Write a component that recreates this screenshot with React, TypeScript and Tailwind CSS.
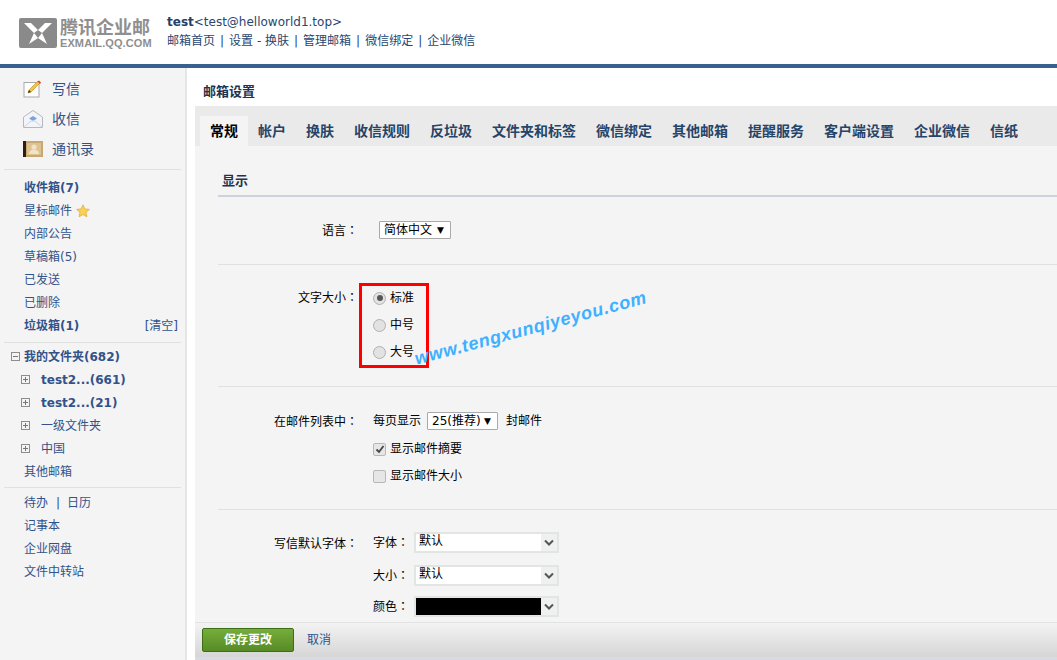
const tabs = ["常规", "帐户", "换肤", "收信规则", "反垃圾", "文件夹和标签", "微信绑定", "其他邮箱", "提醒服务", "客户端设置", "企业微信", "信纸"];

function Logo() {
  return (
    <div className="flex items-start gap-[3px]">
      <svg width="38" height="30" viewBox="0 0 38 30" className="mt-[1px]">
        <rect width="38" height="30" rx="2" fill="#8a8a8a" />
        <path d="M5 5h7l7 7 7-7h7L23 15l5 11-9-6-9 6 5-11z" fill="#fff" />
        <path d="M19 12l4 3-4 5-4-5z" fill="#8a8a8a" />
      </svg>
      <div className="flex w-[92px] flex-col text-[#8f8f8f]">
        <span className="text-[18px] leading-[21px] font-bold whitespace-nowrap">腾讯企业邮</span>
        <span className="font-['Liberation_Sans',sans-serif] text-[11px] leading-[10px] font-bold tracking-[0.1px] whitespace-nowrap">EXMAIL.QQ.COM</span>
      </div>
    </div>
  );
}

function Header() {
  const links = ["邮箱首页", "设置 - 换肤", "管理邮箱", "微信绑定", "企业微信"];
  return (
    <header className="flex h-16 shrink-0 items-start pt-[17px] pl-[19px]">
      <Logo />
      <div className="ml-[15px] text-[12px] text-[#29466f]">
        <div className="-mt-[5px] leading-[20px]">
          <b className="text-[#263f63]">test</b>&lt;test@helloworld1.top&gt;
        </div>
        <div className="flex leading-[19px]">
          {links.map((l, i) => (
            <span key={l} className="whitespace-pre">
              {i > 0 && <span className="px-[5px]">|</span>}
              {l}
            </span>
          ))}
        </div>
      </div>
    </header>
  );
}

function ComposeIcon() {
  return (
    <svg width="20" height="18" viewBox="0 0 20 18">
      <rect x="1" y="2.500" width="15" height="14.500" fill="#fff" stroke="#a9a9a9" />
      <path d="M5 13l1-3 9-9 2 2-9 9z" fill="#f4c53f" stroke="#b9872a" strokeWidth=".6" />
      <path d="M14.500 1.500l1.500-1 2 2-1 1.500z" fill="#d9472f" />
      <path d="M5 13l1-3 2 2z" fill="#333" />
    </svg>
  );
}

function InboxIcon() {
  return (
    <svg width="20" height="18" viewBox="0 0 20 18">
      <path d="M.5 7L10 .5 19.500 7v10.500H.5z" fill="#f3f4f7" stroke="#b4b8c2" />
      <path d="M6 8.500L10 6l4 2.500L10 11z" fill="#7da3dc" />
      <path d="M.5 17.500L8 11h4l7.500 6.500" fill="none" stroke="#d0d3da" />
    </svg>
  );
}

function ContactIcon() {
  return (
    <svg width="20" height="16" viewBox="0 0 20 16">
      <rect width="20" height="16" fill="#c9a971" />
      <rect x="4" y="2" width="14" height="12" fill="#dcc391" />
      <rect width="3" height="16" fill="#2b2015" />
      <circle cx="11" cy="6" r="2.600" fill="#f1e3c4" />
      <path d="M6 13c0-3 2-4.500 5-4.500s5 1.500 5 4.500z" fill="#f1e3c4" />
    </svg>
  );
}

function Star() {
  return (
    <svg width="14" height="14" viewBox="0 0 24 24">
      <path d="M12 1.500l3.200 7 7.600.8-5.700 5.100 1.600 7.500L12 18l-6.700 3.900 1.600-7.500L1.200 9.300l7.600-.8z" fill="#fbd24e" stroke="#e2b04a" strokeWidth="1.500" />
    </svg>
  );
}

function TreeBox({ open }: { open?: boolean }) {
  return (
    <span className="relative mr-[11px] inline-block h-[9px] w-[9px] shrink-0 border border-[#8d8d8d]">
      <span className="absolute top-[3px] left-[1px] h-px w-[5px] bg-[#777]" />
      {!open && <span className="absolute top-[1px] left-[3px] h-[5px] w-px bg-[#777]" />}
    </span>
  );
}

function Item({ children, className = "" }: { children: React.ReactNode; className?: string }) {
  return <div className={`flex h-[23px] items-center whitespace-nowrap ${className}`}>{children}</div>;
}

function Sidebar() {
  const nav: [React.ReactNode, string][] = [
    [<ComposeIcon />, "写信"],
    [<InboxIcon />, "收信"],
    [<ContactIcon />, "通讯录"],
  ];
  return (
    <aside className="w-[187px] shrink-0 border-r-2 border-[#e6e6e6] bg-[#f4f4f4] text-[12px] text-[#31528a]">
      <nav className="pt-[6px] pl-[23px]">
        {nav.map(([icon, label]) => (
          <div key={label} className="flex h-[30px] items-center text-[14px]">
            <span className="flex w-[29px]">{icon}</span>
            {label}
          </div>
        ))}
      </nav>
      <div className="mx-[4px] mt-[5px] h-px bg-[#e0e0e0]" />
      <div className="mt-[6px] pr-[7px] pl-[24px]">
        <Item className="font-bold">收件箱(7)</Item>
        <Item>星标邮件<span className="ml-[4px]"><Star /></span></Item>
        <Item>内部公告</Item>
        <Item>草稿箱(5)</Item>
        <Item>已发送</Item>
        <Item>已删除</Item>
        <Item className="justify-between">
          <b>垃圾箱(1)</b>
          <span>[清空]</span>
        </Item>
      </div>
      <div className="mx-[4px] mt-[5px] h-px bg-[#e0e0e0]" />
      <div className="mt-[2px]">
        <Item className="pl-[11px] font-bold"><span className="-mr-[7px]"><TreeBox open /></span>我的文件夹(682)</Item>
        <Item className="pl-[21px] font-bold"><TreeBox />test2...(661)</Item>
        <Item className="pl-[21px] font-bold"><TreeBox />test2...(21)</Item>
        <Item className="pl-[21px]"><TreeBox />一级文件夹</Item>
        <Item className="pl-[21px]"><TreeBox />中国</Item>
        <Item className="pl-[24px]">其他邮箱</Item>
      </div>
      <div className="mx-[4px] mt-[4px] h-px bg-[#e0e0e0]" />
      <div className="mt-[3px] pl-[24px]">
        <Item className="whitespace-pre">待办<span className="pr-[7px] pl-[8px]">|</span>日历</Item>
        <Item>记事本</Item>
        <Item>企业网盘</Item>
        <Item>文件中转站</Item>
      </div>
    </aside>
  );
}

function MiniSelect({ value, className = "" }: { value: string; className?: string }) {
  return (
    <span className={`flex h-[18px] items-center justify-between rounded-[1px] border border-[#a9a9a9] bg-white pr-[6px] pl-[4px] text-[12px] text-black ${className}`}>
      {value}
      <span className="text-[9px] leading-none">▼</span>
    </span>
  );
}

function Radio({ checked }: { checked?: boolean }) {
  return (
    <span className="flex h-[13px] w-[13px] items-center justify-center rounded-full border border-[#b0b0b0] bg-[#e2e2e2]">
      {checked && <span className="h-[6px] w-[6px] rounded-full bg-[#555]" />}
    </span>
  );
}

function Check({ checked }: { checked?: boolean }) {
  return (
    <span className="flex h-[13px] w-[13px] items-center justify-center rounded-[2px] border border-[#b8b8b8] bg-[#e6e6e6]">
      {checked && (
        <svg width="10" height="10" viewBox="0 0 10 10">
          <path d="M1.500 5.500L4 8l4.500-6" fill="none" stroke="#444" strokeWidth="1.800" />
        </svg>
      )}
    </span>
  );
}

function FontSelect({ value, fill }: { value?: string; fill?: boolean }) {
  return (
    <span className="flex h-[21px] w-[145px] border-2 border-[#e2e6e3] bg-[#f0f0f0]">
      <span className={`flex-1 pl-[3px] text-[12px] leading-[14px] text-black ${fill ? "bg-black" : "bg-white"}`}>{value}</span>
      <span className="flex w-[16px] items-center justify-center">
        <svg width="10" height="7" viewBox="0 0 10 7">
          <path d="M1 1.500l4 4 4-4" fill="none" stroke="#555" strokeWidth="2" />
        </svg>
      </span>
    </span>
  );
}

// the TC cut centres the full-width colon, the SC cut pushes it to the left
function Colon() {
  return <span className="font-['Noto_Sans_CJK_TC',sans-serif]">：</span>;
}

function Label({ children, className = "" }: { children: React.ReactNode; className?: string }) {
  return (
    <div className={`w-[141px] shrink-0 pr-[1px] text-right whitespace-nowrap ${className}`}>
      {children}
      <Colon />
    </div>
  );
}

function Settings() {
  return (
    <div className="flex min-h-0 flex-1 flex-col overflow-hidden bg-[#f4f4f4] pl-[23px] text-[12px] text-black">
      <h2 className="mt-[26px] pl-[4px] text-[13px] leading-[18px] font-bold text-[#1e3350]">显示</h2>
      <div className="mt-[5px] h-[2px] bg-[#cdd2de]" />

      <div className="flex h-[68px] items-start border-b border-[#e0e0e0] pt-[24px]">
        <Label className="leading-[18px]">语言</Label>
        <MiniSelect value="简体中文" className="ml-[20px] w-[72px]" />
      </div>

      <div className="flex h-[122px] items-start border-b border-[#e0e0e0] pt-[18px]">
        <Label className="mt-[6px] leading-[16px]">文字大小</Label>
        <div className="flex h-[85px] w-[70px] flex-col gap-[9px] border-[3px] border-[#f00] pt-[3px] pl-[11px]">
          {["标准", "中号", "大号"].map((t, i) => (
            <label key={t} className="flex h-[18px] items-center gap-[4px]">
              <Radio checked={i === 0} />
              {t}
            </label>
          ))}
        </div>
      </div>

      <div className="flex h-[123px] items-start border-b border-[#e0e0e0] pt-[25px]">
        <Label className="leading-[18px]">在邮件列表中</Label>
        <div className="ml-[14px] flex flex-col">
          <div className="flex h-[18px] items-center">
            每页显示
            <MiniSelect value="25(推荐)" className="mr-[8px] ml-[6px] w-[71px]" />
            封邮件
          </div>
          <label className="mt-[10px] flex h-[18px] items-center gap-[4px]"><Check checked />显示邮件摘要</label>
          <label className="mt-[9px] flex h-[18px] items-center gap-[4px]"><Check />显示邮件大小</label>
        </div>
      </div>

      <div className="flex items-start pt-[22px]">
        <Label className="mt-[2px] leading-[18px]">写信默认字体</Label>
        <div className="ml-[14px] flex flex-col gap-[12px]">
          {["字体", "大小"].map((k) => (
            <div key={k} className="flex h-[21px] items-center">
              <span className="w-[41px]">{k}<Colon /></span>
              <FontSelect value="默认" />
            </div>
          ))}
          <div className="-mt-[2px] flex h-[21px] items-center">
            <span className="w-[41px]">颜色<Colon /></span>
            <FontSelect fill />
          </div>
        </div>
      </div>
    </div>
  );
}

function Main() {
  return (
    <main className="ml-[8px] flex min-w-0 flex-1 flex-col">
      <h1 className="flex h-[38px] shrink-0 items-center pt-[10px] pl-[8px] text-[13px] font-bold text-[#1e3350]">邮箱设置</h1>
      <div className="flex h-[40px] shrink-0 items-end bg-[#eaeaea] pl-[5px] text-[14px] font-bold text-[#264468]">
        {tabs.map((t, i) => (
          <span key={t} className={`flex h-[30px] items-center px-[10px] whitespace-nowrap ${i === 0 ? "bg-[#f4f4f4] text-black" : ""}`}>
            {t}
          </span>
        ))}
      </div>
      <Settings />
      <footer className="flex h-[35px] shrink-0 items-center border-t border-[#e2e2e2] bg-gradient-to-b from-[#f3f3f3] to-[#d6d6d6] pl-[7px] text-[12px] text-[#31528a]">
        <button className="h-[24px] w-[92px] rounded-[2px] border border-[#3c6e13] bg-gradient-to-b from-[#76ad3b] to-[#578b25] text-[12px] font-bold text-white">
          保存更改
        </button>
        <span className="ml-[13px]">取消</span>
      </footer>
      <div className="h-[3px] shrink-0 bg-[#d7dbe6]" />
    </main>
  );
}

export default function App() {
  return (
    <div className="relative flex h-[660px] w-[1057px] flex-col overflow-hidden bg-white font-['DejaVu_Sans','Noto_Sans_CJK_SC',sans-serif]">
      <Header />
      <div className="h-[4px] shrink-0 bg-[#38618f]" />
      <div className="flex min-h-0 flex-1">
        <Sidebar />
        <Main />
      </div>
      {/* site watermark over the screenshot */}
      <span className="absolute top-[315px] left-[411px] origin-center -rotate-[15deg] font-['Liberation_Sans',sans-serif] text-[18px] font-bold tracking-[0.6px] whitespace-nowrap text-[#3fb0ff] italic">
        www.tengxunqiyeyou.com
      </span>
    </div>
  );
}
